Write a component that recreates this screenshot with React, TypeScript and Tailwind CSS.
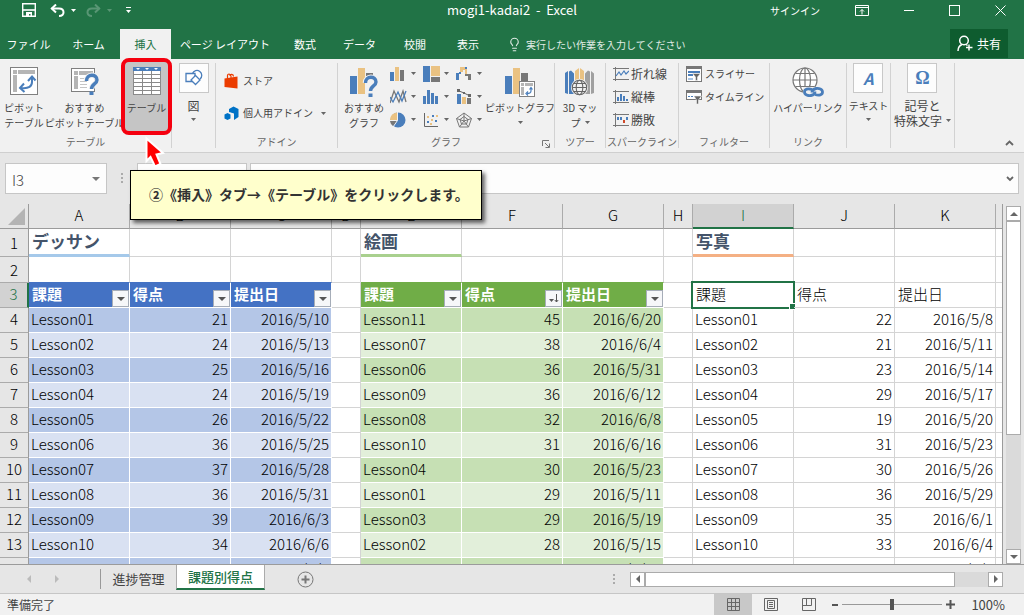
import React from "react";
import { Lightbulb } from "lucide-react";

const BLUE = "#4a7ebb";
const SAND = "#eac282";
const GRAY = "#777777";

function Caret({ className = "text-[#666]" }: { className?: string }) {
  return (
    <svg width="5" height="3" viewBox="0 0 5 3" className={"shrink-0 " + className} aria-hidden="true">
      <path d="M0 0h5L2.5 3z" fill="currentColor" />
    </svg>
  );
}

/* ---------- icons ---------- */

const PivotTableIcon = () => (
  <svg width="28" height="28" viewBox="0 0 28 28">
    <rect x="0.5" y="0.5" width="27" height="27" fill="#fff" stroke="#808080" />
    <path d="M3 3h4v4H3zM8 3h17v4H8zM3 8h4v17H3z" fill="#b5b5b5" />
    <path d="M22 11v4c0 4-3 7-11 6" fill="none" stroke={BLUE} strokeWidth="2" />
    <path d="M18 14l4-4.500 3.500 4M14 16.500L10 21l4.500 4" fill="none" stroke={BLUE} strokeWidth="2" />
  </svg>
);

const Question = () => (
  <>
    <path d="M15.500 14c0-7.500 10.500-7.500 10.500-1 0 4-5.500 4-5.500 9" fill="none" stroke="#f1f1f1" strokeWidth="5.500" />
    <path d="M15.500 14c0-7.500 10.500-7.500 10.500-1 0 4-5.500 4-5.500 9" fill="none" stroke={BLUE} strokeWidth="3.400" />
    <rect x="18.500" y="24.500" width="4" height="3.500" fill={BLUE} />
  </>
);

const SuggestPivotIcon = () => (
  <svg width="28" height="28" viewBox="0 0 28 28">
    <rect x="0.500" y="1.500" width="23" height="23" fill="#fff" stroke="#808080" />
    <path d="M3 4h4v4H3zM8 4h14v4H8zM3 9h4v13H3z" fill="#b5b5b5" />
    <path d="M9 11.500h5M9 14.500h7M9 17.500h7M9 20.500h7" stroke="#c5c5c5" />
    <Question />
  </svg>
);

const TableIcon = () => (
  <svg width="28" height="28" viewBox="0 0 28 28">
    <rect width="28" height="28" fill="#8a8a8a" />
    <rect width="28" height="4" fill={BLUE} />
    <path d="M3 1h4L5 3zM12 1h4l-2 2zM21 1h4l-2 2z" fill="#fff" />
    {[4, 8, 12, 16, 20, 24].map((y) => (
      <path key={y} d={"M1 " + (y + 1.5) + "h8M10 " + (y + 1.5) + "h8M19 " + (y + 1.5) + "h8"} stroke="#fff" strokeWidth="3" />
    ))}
  </svg>
);

const ShapesIcon = () => (
  <svg width="18" height="18" viewBox="0 0 18 18" fill="#fff" stroke={BLUE} strokeWidth="1.300">
    <path d="M7.500 4.500a4.800 4.800 0 1 1 7.500 5.500" />
    <path d="M1 4.500h9v8H1z" />
    <path d="M10.500 6.500L15 11l-4.500 4.500L6 11z" />
  </svg>
);

const StoreIcon = () => (
  <svg width="15" height="16" viewBox="0 0 15 16">
    <path d="M0.500 5.500L13.500 3.500V15.500L0.500 14z" fill="#eb3c00" />
    <path d="M3.500 6V2.500c0-2 3-2 3.500.5V5M6 3c0-2.500 3.500-2 3.500.5" fill="none" stroke="#eb3c00" strokeWidth="1.200" />
  </svg>
);

const AddinIcon = () => (
  <svg width="15" height="15" viewBox="0 0 15 15">
    <path d="M5 3L9.500 0.500L14.500 3v8L10 14V7.500L5 6z" fill="#0072c6" />
    <path d="M0.500 8.500L3.500 7l3 1.500v4L3.500 14l-3-1.500z" fill="#0072c6" />
    <path d="M6.500 7.200l3 1.300V14" fill="none" stroke="#f1f1f1" strokeWidth="0.800" />
  </svg>
);

const SuggestChartIcon = () => (
  <svg width="28" height="30" viewBox="0 0 28 30">
    <rect x="0" y="9" width="7" height="18" fill={BLUE} />
    <rect x="8" y="1" width="7" height="26" fill={SAND} />
    <rect x="16" y="6" width="7" height="21" fill={GRAY} />
    <rect x="15" y="9" width="9" height="19" fill="#f1f1f1" />
    <g transform="translate(0 2)">
      <Question />
    </g>
  </svg>
);

const PivotChartIcon = () => (
  <svg width="30" height="30" viewBox="0 0 30 30">
    <rect x="0" y="9" width="7" height="18" fill={BLUE} />
    <rect x="8" y="1" width="7" height="26" fill={SAND} />
    <rect x="16" y="6" width="7" height="8" fill={GRAY} />
    <rect x="14.500" y="14.500" width="15" height="15" fill="#fff" stroke="#808080" />
    <path d="M16 16h3v3h-3zM20 16h8v3h-8zM16 20h3v8h-3z" fill="#b5b5b5" />
    <path d="M26 21v3c0 2-1 2.500-4 2.500M24.500 22.500l1.500-2 1.500 2M23 24.500l-2 2 2 2" fill="none" stroke={BLUE} strokeWidth="1.200" />
  </svg>
);

const MapIcon = () => (
  <svg width="30" height="30" viewBox="0 0 30 30">
    <path d="M0 6l3-2v23l-3-1zM4 4.500l2-1 3 3v20.500H4z" fill={BLUE} />
    <path d="M10 4l4-3v15h-4zM15 1l4 3v12h-4z" fill={SAND} />
    <path d="M20 6.500l3-3 2 1V27h-5zM26 4l3 2.500V26l-3 1z" fill="#a0a0a0" />
    <circle cx="14.500" cy="20.500" r="8.500" fill="#f1f1f1" />
    <g fill="none" stroke="#666" strokeWidth="1.100">
      <circle cx="14.500" cy="20.500" r="7.200" />
      <ellipse cx="14.500" cy="20.500" rx="3.300" ry="7.200" />
      <path d="M7.500 20.500h14M8.500 16.500h12M8.500 24.500h12" />
    </g>
  </svg>
);

const GlobeLinkIcon = () => (
  <svg width="32" height="30" viewBox="0 0 32 30">
    <g fill="#fff" stroke="#777" strokeWidth="1.200">
      <circle cx="13" cy="13" r="12" />
      <ellipse cx="13" cy="13" rx="5.500" ry="12" fill="none" />
      <path d="M13 1v24M1 13h24M3.500 6.500h19M3.500 19.500h19" fill="none" />
    </g>
    <path d="M11 20h21v10H11z" fill="#f1f1f1" />
    <g fill="none" stroke={BLUE} strokeWidth="2.800">
      <path d="M20 22.500c-4-1.500-7.500-.5-7.500 2.500s3.500 4 6.500 3.500 4-2.500 4-4" />
      <path d="M23 27.500c4 1.500 7.500.5 7.500-2.500s-3.500-4-6.500-3.500-4 2.500-4 4" />
    </g>
  </svg>
);

const chartIcons: { name: string; art: React.ReactNode }[] = [
  { name: "縦棒グラフ", art: <><path d="M0 6h4v9H0z" fill={BLUE} /><path d="M5 1h4v14H5z" fill={SAND} /><path d="M10 4h4v11h-4z" fill={GRAY} /></> },
  { name: "階層構造グラフ", art: <><path d="M0 0h7v16H0z" fill={BLUE} /><path d="M8 0h9v10H8z" fill={SAND} /><path d="M8 11h9v5H8z" fill={GRAY} /></> },
  { name: "ウォーターフォール図", art: <><path d="M0 7h3v7H0zM3 6h2v2H3z" fill={BLUE} /><path d="M4 1h7v8H9V4H7v2H4z" fill={SAND} /><path d="M9 1h2v2H9z" fill={BLUE} /><path d="M9 8h6v6h-3v-4H9z" fill={GRAY} /></> },
  { name: "折れ線グラフ", art: <g fill="none" strokeWidth="1.300"><path d="M0 14L4 2l5 11 4-11 3 11" stroke={GRAY} /><path d="M0 8l3 5 5-10 4 9 4-10" stroke={BLUE} /></g> },
  { name: "統計グラフ", art: <path d="M0 7h3v8H0zM4 1h3v14H4zM8 4h3v11H8zM12 7h3v8h-3z" fill={BLUE} /> },
  { name: "複合グラフ", art: <><path d="M1 5h4v10H1z" fill={BLUE} /><path d="M6 8h4v7H6z" fill={SAND} /><path d="M11 9h4v6h-4z" fill={GRAY} /><path d="M2 1.500L8 4l6 3" fill="none" stroke="#666" /><path d="M1 0h3v3H1zM7 3h2v2H7zM12 5h3v3h-3z" fill="#666" /></> },
  { name: "円グラフ", art: <><circle cx="8" cy="8" r="7.500" fill={BLUE} /><path d="M7 8V0.500A7.500 7.500 0 0 0 0 8z" fill={SAND} /><path d="M0 9h7l-4 5A7 7 0 0 1 0 9z" fill={GRAY} /><path d="M7.500 0v8.500L3 15M0 8.500h7.500" stroke="#f1f1f1" fill="none" /></> },
  { name: "散布図", art: <><path d="M1.500 1v13.500H15" fill="none" stroke="#666" /><path d="M4 9h2v2H4zM9 3h2v2H9zM12 8h2v2h-2z" fill={BLUE} /><path d="M4 4h2v2H4zM8 7h2v2H8zM13 3h2v2h-2zM7 11h2v2H7z" fill={SAND} /></> },
  { name: "レーダー チャート", art: <g fill="none" stroke="#777"><path d="M8 1l7.500 5.500L12.500 15h-9L.5 6.500z" /><path d="M8 4.500l4 3-1.500 4.500h-5L4 7.500z" /><path d="M8 1v8M.5 6.500L8 9l7.500-2.500M3.500 15L8 9l4.500 6" /></g> },
];

const SparkIcon = ({ kind }: { kind: "line" | "col" | "win" }) => (
  <svg width="16" height="14" viewBox="0 0 16 14">
    <path d="M0 1.500h16M0 12.500h16M2.500 0v14" fill="none" stroke="#777" />
    {kind === "line" && <path d="M3 9l3-4 2 3 3-4 2 3 3-3" fill="none" stroke={BLUE} strokeWidth="1.200" />}
    {kind === "col" && <path d="M4 7h2v4H4zM7 4h2v7H7zM10 6h2v5h-2zM13 9h2v2h-2z" fill={BLUE} />}
    {kind === "win" && <><path d="M4 4h2v3H4zM7 4h2v3H7zM13 4h2v3h-2z" fill={BLUE} /><path d="M10 7h2v3h-2z" fill="#d04a2a" /></>}
  </svg>
);

const SlicerIcon = () => (
  <svg width="16" height="16" viewBox="0 0 16 16">
    <rect x="0.500" y="0.500" width="15" height="15" fill="#fff" stroke="#777" />
    <path d="M0 0h16v3H0z" fill="#777" />
    <path d="M2 5h12v2H2zM2 8h5v2H2z" fill={BLUE} />
    <path d="M2 12h5v2H2z" fill="#a9c4e4" />
    <path d="M6.500 7.500h8L11.500 11v3.500h-2V11z" fill="#666" stroke="#fff" strokeWidth="0.500" />
  </svg>
);

const TimelineIcon = () => (
  <svg width="16" height="14" viewBox="0 0 16 14">
    <rect x="0.500" y="0.500" width="15" height="9" fill="#fff" stroke="#777" />
    <path d="M0 0h16v3H0z" fill="#777" />
    <path d="M2 6h2v1H2zM5 6h2v1H5zM8 6h2v1H8z" fill={BLUE} />
    <path d="M8 6h7.500L12.500 10v4h-2v-4z" fill="#666" stroke="#f1f1f1" strokeWidth="0.600" />
  </svg>
);

/* ---------- ribbon ---------- */

function Group({ label, width, children }: { label: string; width: string; children: React.ReactNode }) {
  return (
    <section aria-label={label || "図"} className={"relative my-1 flex shrink-0 flex-col border-r border-[#d2d2d2] " + width}>
      <div className="flex flex-1 justify-center">{children}</div>
      <div className="h-3 whitespace-nowrap text-center text-[10px] leading-3 text-[#666]">{label}</div>
    </section>
  );
}

function BigButton({ icon, lines, width, caret }: { icon: React.ReactNode; lines: string[]; width: string; caret?: "below" | "inline" }) {
  return (
    <button className={"flex shrink-0 flex-col items-center text-[10px] leading-[15px] whitespace-nowrap text-[#444] " + width}>
      <span className="flex h-[33px] items-start justify-center">{icon}</span>
      {lines.map((l, i) => (
        <span key={l} className="flex items-center justify-center gap-1">
          {l}
          {caret === "inline" && i === lines.length - 1 && <Caret />}
        </span>
      ))}
      {caret === "below" && <span className="flex h-[15px] items-center"><Caret /></span>}
    </button>
  );
}

function BoxButton({ icon, lines, small, caret }: { icon: React.ReactNode; lines: string[]; small?: boolean; caret: "below" | "inline" }) {
  return (
    <button className={"flex flex-col items-center whitespace-nowrap leading-[15px] text-[#444] " + (small ? "text-[10px]" : "text-xs")}>
      <span className="mb-[5px] flex size-[30px] items-center justify-center border border-[#c8c8c8] bg-[#fdfdfd]">{icon}</span>
      {lines.map((l, i) => (
        <span key={l} className="flex items-center justify-center gap-1">
          {l}
          {caret === "inline" && i === lines.length - 1 && <Caret />}
        </span>
      ))}
      {caret === "below" && <span className="flex h-3 items-center"><Caret /></span>}
    </button>
  );
}

function Ribbon() {
  return (
    <div className="flex h-[94px] shrink-0 border-b border-[#cfcfcf] bg-[#f1f1f1]">
      <Group label="テーブル" width="w-[172px]">
        <BigButton width="w-[42px] pt-1 pl-1.5" icon={<PivotTableIcon />} lines={["ピボット", "テーブル"]} />
        <BigButton width="w-[79px] pt-1 pl-1.5" icon={<SuggestPivotIcon />} lines={["おすすめ", "ピボットテーブル"]} />
        <div className="relative w-[50px]">
          <div className="absolute -top-[5px] left-0 z-10 flex h-[77px] w-[51px] rounded-lg border-4 border-[#f5000f] bg-[#c5c5c5] pt-[5px]">
            <BigButton width="w-[43px]" icon={<TableIcon />} lines={["テーブル"]} />
          </div>
          <svg className="absolute left-6 top-[73px] z-30" width="22" height="33" viewBox="0 0 22 33" aria-hidden="true">
            <path d="M1.500 2.500v22.500l4-4 4.500 9.500 5.500-2.500-4-9.500 6.500-1.500z" fill="#ff0000" stroke="#fff" strokeWidth="2" />
          </svg>
        </div>
      </Group>
      <Group label="" width="w-[44px]">
        <BoxButton icon={<ShapesIcon />} lines={["図"]} caret="below" />
      </Group>
      <Group label="アドイン" width="w-[122px]">
        <div className="flex flex-1 flex-col gap-4 pl-2 pt-2.5 text-[10px] leading-4 text-[#444]">
          <button className="flex items-center gap-1"><StoreIcon />ストア</button>
          <button className="flex items-center gap-1"><AddinIcon />個人用アドイン<Caret className="ml-1 text-[#666]" /></button>
        </div>
      </Group>
      <Group label="グラフ" width="w-[217px]">
        <BigButton width="w-[52px] pt-1" icon={<SuggestChartIcon />} lines={["おすすめ", "グラフ"]} />
        <div className="-mt-px grid w-[96px] grid-cols-[33px_33px_30px] grid-rows-[23px_23px_23px]">
          {chartIcons.map((c) => (
            <button key={c.name} aria-label={c.name} className="flex items-center gap-1">
              <svg className="shrink-0" width="17" height="16" viewBox="0 0 17 16">{c.art}</svg>
              <Caret />
            </button>
          ))}
        </div>
        <BigButton width="w-[68px] pt-1" icon={<PivotChartIcon />} lines={["ピボットグラフ"]} caret="below" />
        <button aria-label="グラフの設定" className="absolute right-1 bottom-0">
          <svg width="8" height="8" viewBox="0 0 8 8" fill="none" stroke="#777"><path d="M.5 6V.5H7M3 3l4 4M7.500 3.500v4h-4" /></svg>
        </button>
      </Group>
      <Group label="ツアー" width="w-[51px]">
        <BigButton width="w-[50px] pt-1" icon={<MapIcon />} lines={["3D マッ", "プ"]} caret="inline" />
      </Group>
      <Group label="スパークライン" width="w-[73px]">
        <div className="-mt-px flex flex-1 flex-col pl-[7px] text-xs leading-[23px] text-[#444]">
          <button className="flex items-center gap-0.5"><SparkIcon kind="line" />折れ線</button>
          <button className="flex items-center gap-0.5"><SparkIcon kind="col" />縦棒</button>
          <button className="flex items-center gap-0.5"><SparkIcon kind="win" />勝敗</button>
        </div>
      </Group>
      <Group label="フィルター" width="w-[91px]">
        <div className="-mt-px flex flex-1 flex-col pl-[7px] text-[10px] leading-[23px] text-[#444]">
          <button className="flex items-center gap-[3px]"><SlicerIcon />スライサー</button>
          <button className="flex items-center gap-[3px]"><TimelineIcon />タイムライン</button>
        </div>
      </Group>
      <Group label="リンク" width="w-[77px]">
        <BigButton width="w-[76px] pt-1" icon={<GlobeLinkIcon />} lines={["ハイパーリンク"]} />
      </Group>
      <Group label="" width="w-[44px]">
        <BoxButton small icon={<span className="text-base font-bold italic text-[#4a7ebb]">A</span>} lines={["テキスト"]} caret="below" />
      </Group>
      <Group label="" width="w-[64px]">
        <BoxButton icon={<span className="font-['Liberation_Serif',serif] text-lg font-bold text-[#4a7ebb]">Ω</span>} lines={["記号と", "特殊文字"]} caret="inline" />
      </Group>
      <div className="flex flex-1 items-end justify-end pb-1.5 pr-2.5">
        <button aria-label="リボンを折りたたむ">
          <svg width="9" height="6" viewBox="0 0 9 6"><path d="M1 5l3.500-3.500L8 5" fill="none" stroke="#666" strokeWidth="1.800" /></svg>
        </button>
      </div>
    </div>
  );
}

/* ---------- header ---------- */

const tabs = [
  { name: "ファイル", cls: "w-[57px] text-white" },
  { name: "ホーム", cls: "w-[63px] text-white" },
  { name: "挿入", cls: "w-[51px] bg-[#f1f1f1] text-[#217346]" },
  { name: "ページ レイアウト", cls: "w-[108px] text-white" },
  { name: "数式", cls: "w-[52px] text-white" },
  { name: "データ", cls: "w-[57px] text-white" },
  { name: "校閲", cls: "w-[54px] text-white" },
  { name: "表示", cls: "w-[52px] text-white" },
];

function Header() {
  return (
    <header className="shrink-0 bg-[#217346] text-white">
      <div className="grid h-[29px] grid-cols-[1fr_auto_1fr] items-center pb-[9px]">
        <div className="flex items-center pl-[22px]">
          <button aria-label="上書き保存" className="mr-3.5">
            <svg width="14" height="14" viewBox="0 0 14 14"><path d="M.7.7h12.600v12.600H.7z" fill="none" stroke="#fff" strokeWidth="1.400" /><path d="M1 7h12" stroke="#fff" strokeWidth="1.600" /><path d="M4 9h6v5H8.500v-3H7v3H4z" fill="#fff" /></svg>
          </button>
          <button aria-label="元に戻す" className="mr-1.5">
            <svg width="15" height="13" viewBox="0 0 15 13" fill="none" stroke="#fff" strokeWidth="2"><path d="M1.500 4.500H9c6 0 6 7.500 0 7.500" /><path d="M6 .5L1.800 4.500 6 8.500" /></svg>
          </button>
          <Caret className="mr-2.5 text-white" />
          <button aria-label="やり直し" className="mr-1.5 opacity-25">
            <svg width="15" height="13" viewBox="0 0 15 13" fill="none" stroke="#fff" strokeWidth="2"><path d="M13.500 4.500H6c-6 0-6 7.500 0 7.500" /><path d="M9 .5l4.200 4L9 8.500" /></svg>
          </button>
          <Caret className="mr-3.5 text-white opacity-25" />
          <button aria-label="クイック アクセス ツール バーのカスタマイズ">
            <svg width="5" height="6" viewBox="0 0 5 6"><path d="M0 0h5v1H0zM0 3h5L2.500 6z" fill="#fff" /></svg>
          </button>
        </div>
        <h1 className="text-[13px] leading-5 whitespace-pre">mogi1-kadai2{"  -  "}Excel</h1>
        <div className="flex items-center justify-end gap-[35px] pr-[18px]">
          <a href="#signin" className="text-[10px]">サインイン</a>
          <button aria-label="リボンの表示オプション">
            <svg width="14" height="11" viewBox="0 0 14 11" fill="none" stroke="#fff"><path d="M.5.5h13v10H.5zM.5 2.500h13M7 9.500v-5M5 6.500l2-2 2 2" /></svg>
          </button>
          <button aria-label="最小化" className="h-px w-[10px] bg-white" />
          <button aria-label="最大化" className="size-[11px] border border-white" />
          <button aria-label="閉じる">
            <svg width="11" height="11" viewBox="0 0 11 11" stroke="#fff"><path d="M.5.5l10 10M10.500.5l-10 10" /></svg>
          </button>
        </div>
      </div>
      <div className="flex h-[30px] items-stretch">
        <nav className="flex text-[11px]">
          {tabs.map((t) => (
            <button key={t.name} className={"whitespace-nowrap " + t.cls}>{t.name}</button>
          ))}
        </nav>
        <div className="ml-[13px] flex flex-1 items-center gap-1 text-[10px] text-[#e0ece5]">
          <Lightbulb size={15} strokeWidth={1.8} />
          <input aria-label="操作アシスト" placeholder="実行したい作業を入力してください" className="w-52 bg-transparent outline-none placeholder:text-[#e0ece5]" />
        </div>
        <button className="mr-4 mb-px flex w-[58px] items-center justify-center gap-1 bg-[#0e5c2f] text-xs">
          <svg width="16" height="17" viewBox="0 0 16 17" fill="none" stroke="#fff" strokeWidth="1.500"><circle cx="7" cy="5.500" r="4.300" /><path d="M1 16c0-3.500 1.500-5.500 4-6.500M9 9.500l1.500 1M12 9.500v6M9 12.500h6.500" /></svg>
          共有
        </button>
      </div>
    </header>
  );
}

/* ---------- sheet ---------- */

type Row = [string, number, string];
const left: Row[] = [
  ["Lesson01", 21, "2016/5/10"], ["Lesson02", 24, "2016/5/13"], ["Lesson03", 25, "2016/5/16"], ["Lesson04", 24, "2016/5/19"],
  ["Lesson05", 26, "2016/5/22"], ["Lesson06", 36, "2016/5/25"], ["Lesson07", 37, "2016/5/28"], ["Lesson08", 36, "2016/5/31"],
  ["Lesson09", 39, "2016/6/3"], ["Lesson10", 34, "2016/6/6"], ["Lesson11", 48, "2016/6/9"],
];
const middle: Row[] = [
  ["Lesson11", 45, "2016/6/20"], ["Lesson07", 38, "2016/6/4"], ["Lesson06", 36, "2016/5/31"], ["Lesson09", 36, "2016/6/12"],
  ["Lesson08", 32, "2016/6/8"], ["Lesson10", 31, "2016/6/16"], ["Lesson04", 30, "2016/5/23"], ["Lesson01", 29, "2016/5/11"],
  ["Lesson03", 29, "2016/5/19"], ["Lesson02", 28, "2016/5/15"], ["Lesson05", 27, "2016/5/27"],
];
const right: Row[] = [
  ["Lesson01", 22, "2016/5/8"], ["Lesson02", 21, "2016/5/11"], ["Lesson03", 23, "2016/5/14"], ["Lesson04", 29, "2016/5/17"],
  ["Lesson05", 19, "2016/5/20"], ["Lesson06", 31, "2016/5/23"], ["Lesson07", 30, "2016/5/26"], ["Lesson08", 36, "2016/5/29"],
  ["Lesson09", 35, "2016/6/1"], ["Lesson10", 33, "2016/6/4"], ["Lesson11", 44, "2016/6/7"],
];
const heads = ["課題", "得点", "提出日"];
const GRID = "border-r border-b border-[#d4d4d4] align-top ";

function RowHead({ n, active }: { n: number; active?: boolean }) {
  return (
    <th scope="row" className={"border-b border-b-[#ababab] text-center font-light " + (n < 3 ? "align-middle " : "align-top ") + (active ? "border-r-2 border-r-[#217346] bg-[#d2d2d2] text-[#217346]" : "border-r border-r-[#9b9b9b] bg-[#e6e6e6]")}>
      {n}
    </th>
  );
}

function Cells({ row, fill }: { row: Row; fill: string }) {
  return (
    <>
      {row.map((v, i) => (
        <td key={i} className={(fill ? "border-r border-b border-white align-top " + fill : GRID) + (i ? " pr-0.5 text-right" : " pl-0.5")}>{v}</td>
      ))}
    </>
  );
}

function HeadCells({ fill, sorted }: { fill: string; sorted?: boolean }) {
  return (
    <>
      {heads.map((h, i) => (
        <td key={h} className={"border-r border-b border-white pl-[3px] align-top font-bold text-white " + fill}>
          <div className="flex h-6 items-end justify-between">
            <span className="self-start">{h}</span>
            <button aria-label={h + "のフィルター"} className="flex size-[17px] items-center justify-center border border-[#a6adb8] bg-[#f6f7f9]">
              {sorted && i === 1 ? (
                <svg width="10" height="9" viewBox="0 0 10 9"><path d="M0 5h5L2.500 8z" fill="#555" /><path d="M7.500 0v8M5.800 6l1.700 2 1.700-2" fill="none" stroke="#555" /></svg>
              ) : (
                <svg width="8" height="4" viewBox="0 0 8 4"><path d="M0 0h8L4 4z" fill="#555" /></svg>
              )}
            </button>
          </div>
        </td>
      ))}
    </>
  );
}

function Sheet() {
  const line2 = (c: string) => [0, 1, 2].map((i) => <td key={i} className={"border-r border-b border-r-[#d4d4d4] " + c} />);
  const title = (t: string, c: string) => (
    <>
      <td className={"border-r border-b-[3px] border-r-[#d4d4d4] pl-[3px] align-top text-[17px] leading-6 font-bold text-[#44546a] " + c}>{t}</td>
      <td className={GRID} />
      <td className={GRID} />
    </>
  );
  return (
    <table className="w-full table-fixed border-separate border-spacing-0 text-[15px] leading-[22px] font-light text-black">
      <colgroup>
        <col className="w-[29px]" />
        {[0, 1, 2].map((g) => (
          <React.Fragment key={g}>
            <col className="w-[101px]" />
            <col className="w-[101px]" />
            <col className="w-[101px]" />
            {g < 2 && <col className="w-[29px]" />}
          </React.Fragment>
        ))}
        <col />
      </colgroup>
      <thead>
        <tr className="h-[25px]">
          <th className="border-r border-b border-[#9b9b9b]">
            <svg className="ml-auto mr-[3px]" width="17" height="17" viewBox="0 0 17 17" aria-hidden="true"><path d="M17 0v17H0z" fill="#b4b4b4" /></svg>
          </th>
          {"ABCDEFGHIJK".split("").map((c) => (
            <th key={c} scope="col" className={"border-r border-r-[#ababab] align-top font-light " + (c === "I" ? "border-b-2 border-b-[#217346] bg-[#d2d2d2] text-[#217346]" : "border-b border-b-[#9b9b9b]")}>{c}</th>
          ))}
          <th className="border-b border-[#9b9b9b]" />
        </tr>
      </thead>
      <tbody className="bg-white">
        <tr className="h-7">
          <RowHead n={1} />
          {title("デッサン", "border-b-[#a5c9ea]")}
          <td className={GRID} />
          {title("絵画", "border-b-[#a9d08e]")}
          <td className={GRID} />
          {title("写真", "border-b-[#f4b084]")}
          <td className="border-b border-[#d4d4d4]" />
        </tr>
        <tr className="h-[26px]">
          <RowHead n={2} />
          {line2("border-b-[#4472c4]")}
          <td className={GRID} />
          {line2("border-b-[#70ad47]")}
          <td className={GRID} />
          {line2("border-b-[#d4d4d4]")}
          <td className="border-b border-[#d4d4d4]" />
        </tr>
        <tr className="h-[25px]">
          <RowHead n={3} active />
          <HeadCells fill="bg-[#4472c4]" />
          <td className={GRID} />
          <HeadCells fill="bg-[#70ad47]" sorted />
          <td className={GRID} />
          {heads.map((h, i) => (
            <td key={h} className={GRID + "relative pl-[3px]"}>
              {h}
              {i === 0 && (
                <div className="pointer-events-none absolute -inset-0.5 border-2 border-[#217346]">
                  <div className="absolute -right-[3px] -bottom-[3px] size-[7px] border border-white bg-[#217346]" />
                </div>
              )}
            </td>
          ))}
          <td className="border-b border-[#d4d4d4]" />
        </tr>
        {left.map((r, i) => (
          <tr key={i} className="h-[25px]">
            <RowHead n={i + 4} />
            <Cells row={r} fill={i % 2 ? "bg-[#d9e1f2]" : "bg-[#b4c6e7]"} />
            <td className={GRID} />
            <Cells row={middle[i]} fill={i % 2 ? "bg-[#e2efda]" : "bg-[#c6e0b4]"} />
            <td className={GRID} />
            <Cells row={right[i]} fill="" />
            <td className="border-b border-[#d4d4d4]" />
          </tr>
        ))}
      </tbody>
    </table>
  );
}

const arrows = { up: "M0 4h8L4 0z", down: "M0 0h8L4 4z", left: "M4 0v8L0 4z", right: "M0 0v8l4-4z" };

function ScrollButton({ dir }: { dir: "up" | "down" | "left" | "right" }) {
  const horizontal = dir === "left" || dir === "right";
  return (
    <button aria-label={"スクロール " + dir} className="flex size-[15px] shrink-0 items-center justify-center border border-[#ababab] bg-white">
      <svg width={horizontal ? 4 : 8} height={horizontal ? 8 : 4}><path d={arrows[dir]} fill="#666" /></svg>
    </button>
  );
}

const Dots = () => (
  <svg width="3" height="11" viewBox="0 0 3 11" aria-hidden="true"><path d="M0 0h2v2H0zM0 4h2v2H0zM0 8h2v2H0z" fill="#ababab" /></svg>
);

function FormulaBar() {
  return (
    <div className="relative flex shrink-0 items-center px-[5px] py-2.5">
      <div className="flex h-[31px] w-[102px] items-center border border-[#c6c6c6] bg-[#fdfdfd] pr-1.5">
        <input aria-label="名前ボックス" defaultValue="I3" className="w-0 flex-1 bg-transparent pl-1.5 pt-1 text-[15px] font-light text-[#444] outline-none" />
        <button aria-label="名前の一覧"><svg width="8" height="4"><path d="M0 0h8L4 4z" fill="#777" /></svg></button>
      </div>
      <div className="flex w-[30px] justify-center"><Dots /></div>
      <div className="mr-[3px] h-[31px] w-[110px] border border-[#c6c6c6] bg-[#fdfdfd]" />
      <div className="flex h-[31px] flex-1 items-center border border-[#c6c6c6] bg-[#fdfdfd] pr-1">
        <input aria-label="数式バー" className="w-0 flex-1 bg-transparent px-2 text-[15px] outline-none" />
        <button aria-label="数式バーの展開"><svg width="8" height="6" viewBox="0 0 8 6"><path d="M1 1l3 3 3-3" fill="none" stroke="#666" strokeWidth="1.800" /></svg></button>
      </div>
      <div role="note" className="absolute left-[130px] top-[17px] z-20 flex h-[50px] w-[352px] items-center border border-black bg-[#ffffcc] pb-0.5 pl-[18px] text-sm font-bold whitespace-nowrap text-[#333] shadow-[3px_3px_4px_rgba(0,0,0,0.6)]">
        ②《挿入》タブ→《テーブル》をクリックします。
      </div>
    </div>
  );
}

function SheetTabs() {
  return (
    <div className="flex h-7 shrink-0 items-center pr-[21px]">
      <div className="flex w-[100px] items-center gap-6 self-stretch pl-[27px]">
        <button aria-label="前のシート"><svg width="4" height="8"><path d={arrows.left} fill="#bbb" /></svg></button>
        <button aria-label="次のシート"><svg width="4" height="8"><path d={arrows.right} fill="#bbb" /></svg></button>
      </div>
      <button className="h-5 w-[76px] border-l border-[#999] text-[13px] leading-[18px] text-[#444]">進捗管理</button>
      <button className="mb-auto h-[25px] w-[89px] border-x border-b-2 border-x-[#ababab] border-b-[#217346] bg-white text-[13px] font-medium text-[#217346]">課題別得点</button>
      <button aria-label="新しいシート" className="ml-8">
        <svg width="17" height="17" viewBox="0 0 17 17" fill="none" stroke="#777"><circle cx="8.500" cy="8.500" r="7.500" /><path d="M8.500 4.500v8M4.500 8.500h8" strokeWidth="2" /></svg>
      </button>
      <div className="flex flex-1 items-center justify-end">
        <Dots />
        <div className="ml-3.5 flex h-[15px] w-[373px] bg-[#dadada]">
          <ScrollButton dir="left" />
          <div className="w-[310px] border border-[#ababab] bg-white" />
          <div className="flex-1" />
          <ScrollButton dir="right" />
        </div>
      </div>
    </div>
  );
}

function StatusBar() {
  return (
    <footer className="flex h-[22px] shrink-0 items-center border-t border-[#c6c6c6] bg-[#f1f1f1] pl-[7px] pr-[19px] text-xs text-[#444]">
      <span className="flex-1">準備完了</span>
      <button aria-label="標準" className="flex h-full w-[38px] items-center justify-center bg-[#c8c8c8]">
        <svg width="13" height="13" viewBox="0 0 13 13" fill="none" stroke="#666"><path d="M.5.5h12v12H.5zM4.500 0v13M8.500 0v13M0 4.500h13M0 8.500h13" /></svg>
      </button>
      <button aria-label="ページ レイアウト" className="flex h-full w-[38px] items-center justify-center">
        <svg width="14" height="13" viewBox="0 0 14 13" fill="none" stroke="#666"><path d="M.5.5h13v12H.5zM3.500 2.500h7v8h-7zM5 4.500h4M5 6.500h4M5 8.500h4" /></svg>
      </button>
      <button aria-label="改ページ プレビュー" className="flex h-full w-[38px] items-center justify-center">
        <svg width="14" height="13" viewBox="0 0 14 13" fill="none" stroke="#666"><path d="M.5.5h13v12H.5zM4.500.5v7M9.500.5v7M.5 7.500h9" /></svg>
      </button>
      <button aria-label="縮小" className="ml-1 h-0.5 w-1.5 bg-[#555]" />
      <input
        type="range"
        aria-label="ズーム"
        min={0}
        max={200}
        defaultValue={100}
        className="mx-1 h-3 w-[100px] appearance-none bg-[linear-gradient(#999,#999)] bg-[length:100%_1px] bg-center bg-no-repeat [&::-webkit-slider-thumb]:h-[11px] [&::-webkit-slider-thumb]:w-1 [&::-webkit-slider-thumb]:appearance-none [&::-webkit-slider-thumb]:bg-[#555]"
      />
      <button aria-label="拡大"><svg width="9" height="9" viewBox="0 0 9 9"><path d="M4.500 0v9M0 4.500h9" stroke="#555" strokeWidth="2" /></svg></button>
      <span className="ml-4 leading-4 text-[13px]">100%</span>
    </footer>
  );
}

export default function App() {
  return (
    <div className="flex h-screen flex-col overflow-hidden bg-[#e6e6e6] font-['Noto_Sans_CJK_JP',sans-serif]">
      <Header />
      <Ribbon />
      <FormulaBar />
      <main className="flex min-h-0 flex-1 border-b border-[#9b9b9b]">
        <div className="min-w-0 flex-1 overflow-hidden border-r border-[#9b9b9b]">
          <Sheet />
        </div>
        <div className="mx-[3px] mt-0.5 flex w-[15px] flex-col bg-[#dadada]">
          <ScrollButton dir="up" />
          <div className="h-[214px] border border-[#ababab] bg-white" />
          <div className="flex-1" />
          <ScrollButton dir="down" />
        </div>
      </main>
      <SheetTabs />
      <StatusBar />
    </div>
  );
}
